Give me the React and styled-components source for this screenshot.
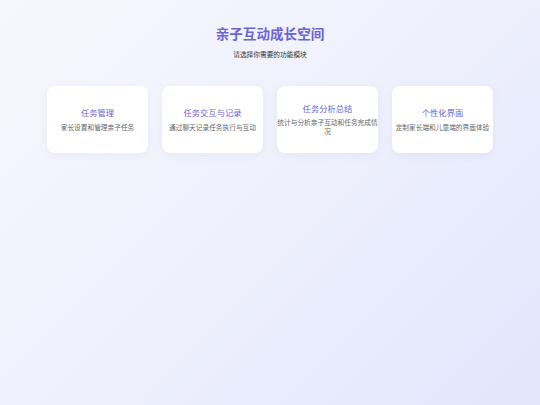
import React from "react";
import styled, { createGlobalStyle } from "styled-components";

const GlobalStyle = createGlobalStyle`
  html, body {
    margin: 0;
    padding: 0;
  }
  body {
    font-family: "Noto Sans CJK SC", "Noto Sans", sans-serif;
  }
`;

const Page = styled.div`
  min-height: 100vh;
  box-sizing: border-box;
  padding: 24px 47px 0 47px;
  background: linear-gradient(135deg, #f7f8fd 0%, #eef0fc 50%, #e1e6fc 100%);
`;

const Header = styled.header`
  display: flex;
  flex-direction: column;
  align-items: center;
`;

const Title = styled.h1`
  margin: 0;
  font-size: 13.6px;
  line-height: 18px;
  font-weight: 600;
  color: #6c63d6;
`;

const Subtitle = styled.p`
  margin: 7px 0 0 0;
  font-size: 6.7px;
  line-height: 10px;
  color: #333;
`;

const Grid = styled.div`
  display: grid;
  grid-template-columns: repeat(4, 1fr);
  gap: 14px;
  max-width: 446px;
  margin: 27px auto 0 auto;
`;

const Card = styled.div`
  height: 67px;
  background: #fff;
  border-radius: 8px;
  box-shadow: 0 2px 8px rgba(110, 110, 200, 0.08);
  display: flex;
  flex-direction: column;
  justify-content: center;
  align-items: center;
  text-align: center;
`;

const CardTitle = styled.h3`
  margin: 0;
  font-size: 8.3px;
  line-height: 11.6px;
  font-weight: 400;
  color: #6c63d6;
`;

const CardText = styled.p`
  margin: 3.8px 0 0 0;
  font-size: 6.7px;
  line-height: 9.3px;
  color: #666;
`;

const modules = [
  { title: "任务管理", text: "家长设置和管理亲子任务" },
  { title: "任务交互与记录", text: "通过聊天记录任务执行与互动" },
  { title: "任务分析总结", text: "统计与分析亲子互动和任务完成情况" },
  { title: "个性化界面", text: "定制家长端和儿童端的界面体验" },
];

function App() {
  return (
    <>
      <GlobalStyle />
      <Page>
        <Header>
          <Title>亲子互动成长空间</Title>
          <Subtitle>请选择你需要的功能模块</Subtitle>
        </Header>
        <Grid>
          {modules.map((m) => (
            <Card key={m.title}>
              <CardTitle>{m.title}</CardTitle>
              <CardText>{m.text}</CardText>
            </Card>
          ))}
        </Grid>
      </Page>
    </>
  );
}

export default App;
